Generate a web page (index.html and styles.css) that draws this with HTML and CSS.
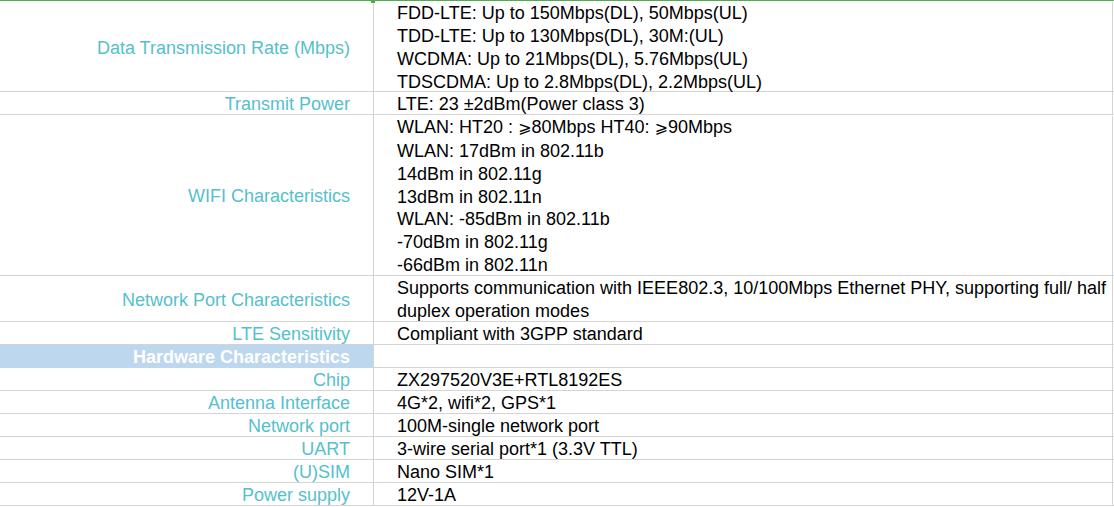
FILE: index.html
```html
<!DOCTYPE html>
<html>
<head>
<meta charset="utf-8">
<link rel="stylesheet" href="styles.css">
</head>
<body>
<div class="sheet">
  <div class="row r-data">
    <div class="label">Data Transmission Rate (Mbps)</div>
    <div class="value multi">FDD-LTE: Up to 150Mbps(DL), 50Mbps(UL)<br>TDD-LTE: Up to 130Mbps(DL), 30M:(UL)<br>WCDMA: Up to 21Mbps(DL), 5.76Mbps(UL)<br>TDSCDMA: Up to 2.8Mbps(DL), 2.2Mbps(UL)</div>
  </div>
  <div class="row">
    <div class="label">Transmit Power</div>
    <div class="value">LTE: 23 ±2dBm(Power class 3)</div>
  </div>
  <div class="row r-wifi">
    <div class="label">WIFI Characteristics</div>
    <div class="value multi">WLAN: HT20 : <span class="ge">⩾</span>80Mbps HT40: <span class="ge">⩾</span>90Mbps<br>WLAN: 17dBm in 802.11b<br>14dBm in 802.11g<br>13dBm in 802.11n<br>WLAN: -85dBm in 802.11b<br>-70dBm in 802.11g<br>-66dBm in 802.11n</div>
  </div>
  <div class="row r-net">
    <div class="label">Network Port Characteristics</div>
    <div class="value multi">Supports communication with IEEE802.3, 10/100Mbps Ethernet PHY, supporting full/ half<br>duplex operation modes</div>
  </div>
  <div class="row">
    <div class="label">LTE Sensitivity</div>
    <div class="value">Compliant with 3GPP standard</div>
  </div>
  <div class="row">
    <div class="label section">Hardware Characteristics</div>
    <div class="value"></div>
  </div>
  <div class="row">
    <div class="label">Chip</div>
    <div class="value">ZX297520V3E+RTL8192ES</div>
  </div>
  <div class="row">
    <div class="label">Antenna Interface</div>
    <div class="value">4G*2, wifi*2, GPS*1</div>
  </div>
  <div class="row">
    <div class="label">Network port</div>
    <div class="value">100M-single network port</div>
  </div>
  <div class="row">
    <div class="label">UART</div>
    <div class="value">3-wire serial port*1 (3.3V TTL)</div>
  </div>
  <div class="row">
    <div class="label">(U)SIM</div>
    <div class="value">Nano SIM*1</div>
  </div>
  <div class="row">
    <div class="label">Power supply</div>
    <div class="value">12V-1A</div>
  </div>
  <div class="handle"></div>
</div>
</body>
</html>
```
FILE: styles.css
```css
html, body {
  margin: 0;
  padding: 0;
  background: #ffffff;
}
body {
  font-family: "Liberation Sans", Arial, sans-serif;
  font-size: 18px;
  color: #000000;
}
.sheet {
  position: relative;
  width: 1114px;
  border-top: 1px solid #4cae4f;
  box-sizing: border-box;
}
.row {
  display: grid;
  grid-template-columns: 374px 739px 1px;
  height: 23px;
  border-bottom: 1px solid #d4d4d4;
  box-sizing: border-box;
}
.r-data { height: 91px; }
.r-wifi { height: 161px; }
.r-net { height: 46px; }
.label {
  display: flex;
  align-items: center;
  justify-content: flex-end;
  padding-right: 23px;
  padding-top: 1px;
  box-sizing: border-box;
  color: #55bfcd;
  border-right: 1px solid #d4d4d4;
  white-space: nowrap;
  line-height: 22px;
}
.label.section {
  background: #bdd7ee;
  color: #ffffff;
  font-weight: bold;
}
.value {
  display: flex;
  flex-direction: column;
  justify-content: center;
  padding-left: 23px;
  padding-top: 1px;
  box-sizing: border-box;
  border-right: 1px solid #d4d4d4;
  white-space: nowrap;
  line-height: 22px;
}
.value.multi {
  display: block;
  line-height: 22.85px;
  align-self: center;
  padding-top: 0;
  margin-top: 1px;
}
.ge {
  font-family: "DejaVu Sans", sans-serif;
  font-size: 16px;
}
.handle {
  position: absolute;
  left: 371px;
  top: -2px;
  width: 4px;
  height: 4px;
  background: #4cae4f;
}
```
